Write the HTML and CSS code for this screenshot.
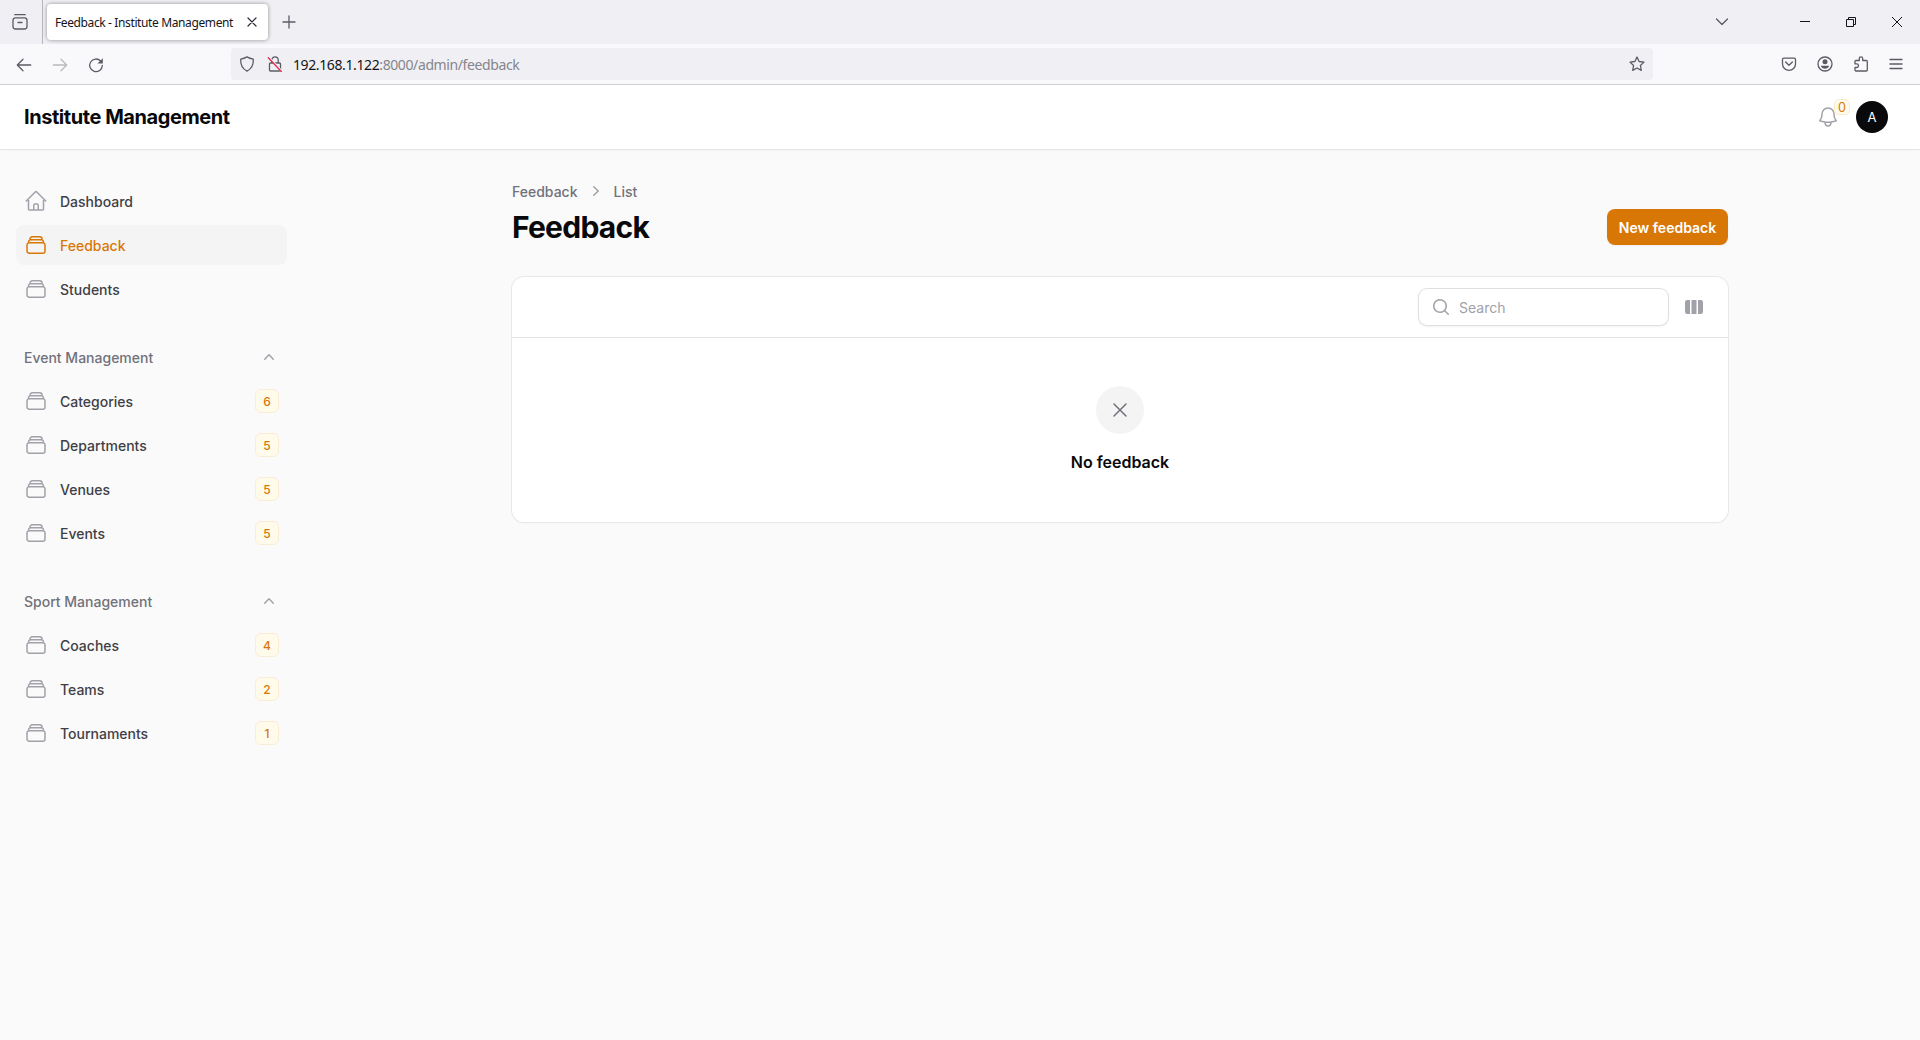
FILE: index.html
```html
<!DOCTYPE html>
<html lang="en">
<head>
<meta charset="utf-8">
<title>Feedback - Institute Management</title>
<link rel="stylesheet" href="styles.css">
</head>
<body>
<svg class="sprite" aria-hidden="true">
  <symbol id="stack" viewBox="0 0 24 24"><path d="M6 6.878V6a2.25 2.25 0 0 1 2.25-2.25h7.5A2.25 2.25 0 0 1 18 6v.878m-12 0c.235-.083.487-.128.75-.128h10.5c.263 0 .515.045.75.128m-12 0A2.25 2.25 0 0 0 4.5 9v.878m13.5-3A2.25 2.25 0 0 1 19.5 9v.878m0 0a2.246 2.246 0 0 0-.75-.128H5.25c-.263 0-.515.045-.75.128m15 0A2.25 2.25 0 0 1 21 12v6a2.25 2.25 0 0 1-2.25 2.25H5.25A2.25 2.25 0 0 1 3 18v-6c0-.98.626-1.813 1.5-2.122"/></symbol>
  <symbol id="home" viewBox="0 0 24 24"><path d="m2.25 12 8.954-8.955c.44-.439 1.152-.439 1.591 0L21.75 12M4.5 9.75v10.125c0 .621.504 1.125 1.125 1.125H9.75v-4.875c0-.621.504-1.125 1.125-1.125h2.25c.621 0 1.125.504 1.125 1.125V21h4.125c.621 0 1.125-.504 1.125-1.125V9.75M8.25 21h8.25"/></symbol>
  <symbol id="chevron-up" viewBox="0 0 20 20"><path fill-rule="evenodd" d="M14.77 12.79a.75.75 0 0 1-1.06-.02L10 8.832 6.29 12.77a.75.75 0 1 1-1.08-1.04l4.25-4.5a.75.75 0 0 1 1.08 0l4.25 4.5a.75.75 0 0 1-.02 1.06Z"/></symbol>
</svg>

<div class="browser">
  <div class="tabbar">
    <div class="view-button"><svg class="line" width="18" height="18" viewBox="0 0 18 18"><path d="M3.8 1.7h10.4M4.5 4.8h9a2.5 2.5 0 0 1 2.5 2.5v6.2a2.5 2.5 0 0 1-2.5 2.5h-9A2.5 2.5 0 0 1 2 13.500V7.300a2.500 2.500 0 0 1 2.500-2.500zM7 9.500h4"/></svg></div>
    <div class="tab">
      <span class="tab-title">Feedback - Institute Management</span>
      <svg class="line dark" width="10" height="10" viewBox="0 0 10 10"><path d="M1 1l8 8M9 1l-8 8"/></svg>
    </div>
    <svg class="line new-tab" width="14" height="14" viewBox="0 0 14 14"><path d="M7 1v12M1 7h12"/></svg>
    <div class="window-buttons">
      <svg class="line" width="14" height="10" viewBox="0 0 14 10"><path d="M1.500 2l5.500 5.500L12.500 2"/></svg>
      <svg class="thin" width="10" height="10" viewBox="0 0 10 10"><path d="M0 4.500h10"/></svg>
      <svg class="thin" width="10" height="10" viewBox="0 0 10 10"><path d="M.5 2.500h7v7h-7zM2.500 2.500v-2h7v7h-2"/></svg>
      <svg class="thin" width="10" height="10" viewBox="0 0 10 10"><path d="M0 0l10 10M10 0L0 10"/></svg>
    </div>
  </div>
  <div class="navbar">
    <div class="nav-buttons">
      <svg class="line" width="16" height="16" viewBox="0 0 16 16"><path d="M14.700 8H1.500M7 2.300L1.300 8 7 13.700"/></svg>
      <svg class="line faded" width="16" height="16" viewBox="0 0 16 16"><path d="M1.300 8h13.200M9 2.300l5.700 5.700L9 13.700"/></svg>
      <svg class="line" width="16" height="16" viewBox="0 0 16 16"><path d="M14.300 8.500A6.300 6.300 0 1 1 12.600 4"/><path class="solid" d="M14.800 1.200v5.300H9.500z"/></svg>
    </div>
    <div class="urlbar">
      <svg class="line" width="16" height="16" viewBox="0 0 16 16"><path d="M8 .9c2 1.300 4 1.900 6.300 2.200.3 5-1.300 9.500-6.300 12C3 12.600 1.400 8.100 1.700 3.100 4 2.800 6 2.200 8 .9z"/></svg>
      <svg class="line lock" width="16" height="16" viewBox="0 0 16 16"><path d="M4.800 7V4a3.200 3.200 0 0 1 6.400 0v3M3.500 7h9a1 1 0 0 1 1 1v6a1 1 0 0 1-1 1h-9a1 1 0 0 1-1-1V8a1 1 0 0 1 1-1z"/><path class="slash-gap" d="M2 1.500l13 14"/><path class="slash" d="M1.300 1.700l13 13.800"/></svg>
      <span class="url"><b>192.168.1.122</b>:8000/admin/feedback</span>
      <svg class="line star" width="16" height="16" viewBox="0 0 16 16"><path d="M8 1l2.100 4.500 4.900.6-3.600 3.400.9 4.900L8 12l-4.300 2.400.9-4.900L1 6.100l4.900-.6z"/></svg>
    </div>
    <div class="toolbar-buttons">
      <svg class="line" width="16" height="16" viewBox="0 0 16 16"><path d="M2.800 2.200h10.400a1.300 1.300 0 0 1 1.300 1.300V8a6.500 6.300 0 0 1-13 0V3.500a1.300 1.300 0 0 1 1.300-1.300zM4.600 6L8 9.300 11.400 6"/></svg>
      <svg class="line" width="16" height="16" viewBox="0 0 16 16"><circle cx="8" cy="8" r="7"/><circle class="solid" cx="8" cy="5.800" r="2.500"/><path class="solid" d="M3.800 9.800h8.400c-.6 2-2.300 3-4.200 3s-3.600-1-4.200-3z"/></svg>
      <svg class="line" width="16" height="16" viewBox="0 0 16 16"><path d="M2 11.500h1.700a1.800 1.800 0 0 0 0-3.600H2V5.500a1 1 0 0 1 1-1h3.300V2.600a1.700 1.700 0 0 1 3.400 0v1.900h3.600a1 1 0 0 1 1 1V14a1 1 0 0 1-1 1H3a1 1 0 0 1-1-1z"/></svg>
      <svg class="line" width="14" height="12" viewBox="0 0 14 12"><path d="M1 1.500h12M1 6h12M1 10.500h12"/></svg>
    </div>
  </div>
</div>

<header class="topbar">
  <div class="brand">Institute Management</div>
  <div class="user-area">
    <div class="bell">
      <svg class="outline" width="24" height="24" viewBox="0 0 24 24"><path d="M14.857 17.082a23.848 23.848 0 0 0 5.454-1.310A8.967 8.967 0 0 1 18 9.750V9A6 6 0 0 0 6 9v.75a8.967 8.967 0 0 1-2.312 6.022c1.733.64 3.560 1.085 5.455 1.310m5.714 0a24.255 24.255 0 0 1-5.714 0m5.714 0a3 3 0 1 1-5.714 0"/></svg>
      <span class="bell-count">0</span>
    </div>
    <div class="avatar">A</div>
  </div>
</header>

<div class="layout">
  <nav class="sidebar">
    <ul class="group">
      <li class="item"><svg class="outline"><use href="#home"/></svg><span>Dashboard</span></li>
      <li class="item active"><svg class="outline"><use href="#stack"/></svg><span>Feedback</span></li>
      <li class="item"><svg class="outline"><use href="#stack"/></svg><span>Students</span></li>
    </ul>
    <ul class="group">
      <li class="group-label"><span>Event Management</span><svg><use href="#chevron-up"/></svg></li>
      <li class="item"><svg class="outline"><use href="#stack"/></svg><span>Categories</span><em>6</em></li>
      <li class="item"><svg class="outline"><use href="#stack"/></svg><span>Departments</span><em>5</em></li>
      <li class="item"><svg class="outline"><use href="#stack"/></svg><span>Venues</span><em>5</em></li>
      <li class="item"><svg class="outline"><use href="#stack"/></svg><span>Events</span><em>5</em></li>
    </ul>
    <ul class="group">
      <li class="group-label"><span>Sport Management</span><svg><use href="#chevron-up"/></svg></li>
      <li class="item"><svg class="outline"><use href="#stack"/></svg><span>Coaches</span><em>4</em></li>
      <li class="item"><svg class="outline"><use href="#stack"/></svg><span>Teams</span><em>2</em></li>
      <li class="item"><svg class="outline"><use href="#stack"/></svg><span>Tournaments</span><em>1</em></li>
    </ul>
  </nav>

  <main class="main">
    <div class="page-header">
      <div>
        <div class="breadcrumbs">
          <span>Feedback</span>
          <svg width="20" height="20" viewBox="0 0 20 20"><path fill-rule="evenodd" d="M7.210 14.770a.75.75 0 0 1 .02-1.060L11.168 10 7.230 6.290a.75.75 0 1 1 1.040-1.080l4.500 4.250a.75.75 0 0 1 0 1.080l-4.500 4.250a.75.75 0 0 1-1.060-.02Z"/></svg>
          <span>List</span>
        </div>
        <h1>Feedback</h1>
      </div>
      <button class="primary" type="button">New feedback</button>
    </div>

    <section class="card">
      <div class="card-toolbar">
        <label class="search">
          <svg width="20" height="20" viewBox="0 0 20 20"><path fill-rule="evenodd" d="M9 3.500a5.500 5.500 0 1 0 0 11 5.500 5.500 0 0 0 0-11ZM2 9a7 7 0 1 1 12.452 4.391l3.328 3.329a.75.75 0 1 1-1.060 1.060l-3.329-3.328A7 7 0 0 1 2 9Z"/></svg>
          <input type="text" placeholder="Search">
        </label>
        <svg class="columns" width="20" height="20" viewBox="0 0 20 20"><path d="M14 17h2.750A2.250 2.250 0 0 0 19 14.750v-9.500A2.250 2.250 0 0 0 16.750 3H14v14ZM12.500 3h-5v14h5V3ZM3.250 3H6v14H3.250A2.250 2.250 0 0 1 1 14.750v-9.500A2.250 2.250 0 0 1 3.250 3Z"/></svg>
      </div>
      <div class="empty">
        <div class="empty-icon"><svg class="outline" width="24" height="24" viewBox="0 0 24 24"><path d="M6 18 18 6M6 6l12 12"/></svg></div>
        <h4>No feedback</h4>
      </div>
    </section>
  </main>
</div>
</body>
</html>
```
FILE: styles.css
```css
* { box-sizing: border-box; }
body {
  margin: 0;
  height: 1040px;
  overflow: hidden;
  background: #fafafa;
  color: #09090b;
  font: 14px/20px Inter, "Liberation Sans", sans-serif;
}
svg { display: block; flex: none; }
ul { margin: 0; padding: 0; list-style: none; }
.sprite { display: none; }

/* Browser window */
.browser { font-family: "Open Sans", "Noto Sans", sans-serif; color: #15141a; }
.line { fill: none; stroke: #5b5b66; stroke-width: 1.3; stroke-linecap: round; stroke-linejoin: round; }
.line.dark { stroke: #2b2a33; stroke-width: 1.2; }
.line.faded { stroke: #b9b9bf; }
.line .solid { fill: #5b5b66; stroke: none; }
.thin { fill: none; stroke: #15141a; stroke-width: 1; }
.tabbar { display: flex; align-items: center; height: 44px; background: #f0f0f4; }
.view-button { display: flex; align-items: center; width: 43px; height: 44px; padding-left: 11px; border-right: 1px solid #b4b4bb; }
.tab {
  display: flex; align-items: center; justify-content: space-between;
  width: 221px; height: 36px; margin-left: 4px; padding: 0 11px 0 8px;
  background: #fff; border-radius: 4px; box-shadow: 0 0 4px rgba(0, 0, 0, .4);
}
.tab-title { padding-top: 1px; font-family: "Noto Sans", sans-serif; font-size: 12px; letter-spacing: -.38px; white-space: nowrap; }
.new-tab { margin-left: 14px; }
.window-buttons { display: flex; align-items: center; margin-left: auto; padding-right: 18px; }
.window-buttons svg + svg { margin-left: 36px; }
.window-buttons svg:nth-child(2) { margin-left: 71px; }
.navbar { display: flex; align-items: center; height: 41px; background: #f9f9fb; border-bottom: 1px solid #ccccd1; }
.nav-buttons { display: flex; gap: 20px; width: 231px; padding: 1px 0 0 16px; }
.urlbar { display: flex; align-items: center; width: 1422px; height: 32px; padding: 0 8px; background: #f0f0f4; border-radius: 4px; }
.lock { margin-left: 12px; }
.slash-gap { stroke: #f0f0f4; stroke-width: 2; }
.slash { stroke: #e22850; }
.url { margin-left: 10px; padding-top: 2px; font-family: "Noto Sans", sans-serif; font-size: 14px; letter-spacing: -.39px; color: #85858c; }
.url b { font-weight: 400; color: #15141a; }
.star { margin-left: auto; }
.toolbar-buttons { display: flex; align-items: center; gap: 20px; margin-left: auto; padding-right: 17px; }

/* Application */
.outline { width: 24px; height: 24px; fill: none; stroke: #a1a1aa; stroke-width: 1.5; stroke-linecap: round; stroke-linejoin: round; }
.topbar {
  display: flex; align-items: center; justify-content: space-between;
  height: 64px; padding: 0 32px 0 24px; background: #fff;
  box-shadow: 0 0 0 1px rgba(9, 9, 11, .05), 0 1px 2px rgba(0, 0, 0, .05);
  clip-path: inset(0 0 -4px 0);
}
.brand { font-size: 20px; font-weight: 700; letter-spacing: -.44px; }
.user-area { display: flex; align-items: center; gap: 16px; }
.bell { position: relative; }
.bell-count {
  position: absolute; left: 18px; top: -6px; width: 16px; height: 16px;
  border: 1px solid #fbe9cf; border-radius: 5px; background: #fffbeb;
  color: #d97706; font-size: 12.5px; line-height: 15px; text-align: center;
}
.avatar { width: 32px; height: 32px; border-radius: 50%; background: #09090b; color: #fff; font-size: 13px; line-height: 33px; text-align: center; }
.layout { display: flex; }
.sidebar { display: flex; flex-direction: column; gap: 28px; width: 320px; padding: 32px 33px 32px 16px; }
.group { display: flex; flex-direction: column; gap: 4px; }
.item, .group-label { display: flex; align-items: center; height: 40px; padding: 0 8px; border-radius: 8px; font-weight: 500; color: #3f3f46; }
.item { gap: 12px; }
.item span, .group-label span { flex: 1; padding-top: 1px; }
.item.active { background: #f4f4f5; color: #d97706; }
.item.active .outline { stroke: #d97706; }
.item em {
  width: 24px; height: 24px; border: 1px solid #fbecd5; border-radius: 6px; background: #fffbeb;
  color: #d97706; font-size: 12px; font-style: normal; line-height: 23px; text-align: center;
}
.group-label { color: #71717a; }
.group-label svg { width: 20px; height: 20px; fill: #a1a1aa; }
.main { width: 1280px; margin: 0 auto; padding: 32px; }
.page-header { display: flex; align-items: flex-end; justify-content: space-between; }
.breadcrumbs { display: flex; align-items: center; gap: 8px; height: 20px; margin-bottom: 8px; font-weight: 500; color: #71717a; }
.breadcrumbs span { padding-top: 1px; }
.breadcrumbs svg { fill: #a1a1aa; }
h1 { margin: 0; font-size: 30px; font-weight: 700; line-height: 36px; letter-spacing: -.75px; }
.primary {
  width: 121px; height: 36px; padding: 1px 0 0; border: 0; border-radius: 8px; background: #d97706; color: #fff;
  font: 600 14px/20px Inter, sans-serif; box-shadow: 0 1px 2px rgba(0, 0, 0, .05); white-space: nowrap;
}
.card { margin-top: 32px; border-radius: 12px; background: #fff; box-shadow: 0 0 0 1px #e9e9ea, 0 1px 3px rgba(0, 0, 0, .05); }
.card-toolbar { display: flex; align-items: center; justify-content: flex-end; gap: 16px; height: 61px; padding: 0 24px; border-bottom: 1px solid #e4e4e7; }
.search { display: flex; align-items: center; gap: 8px; width: 249px; height: 36px; padding-left: 12px; border-radius: 8px; box-shadow: 0 0 0 1px #dfdfe1, 0 1px 2px 1px rgba(0, 0, 0, .05); }
.search svg, .columns { fill: #a1a1aa; }
.search input { flex: 1; min-width: 0; padding: 1px 0 0; border: 0; outline: 0; background: none; font: 14px/20px Inter, sans-serif; }
.search input::placeholder { color: #a1a1aa; }
.empty { display: flex; flex-direction: column; align-items: center; padding: 48px 24px; }
.empty-icon { display: grid; place-items: center; width: 48px; height: 48px; margin-bottom: 16px; border-radius: 50%; background: #f4f4f5; }
.empty-icon .outline { stroke: #71717a; }
h4 { margin: 0; font-size: 16px; font-weight: 600; line-height: 24px; }
```
